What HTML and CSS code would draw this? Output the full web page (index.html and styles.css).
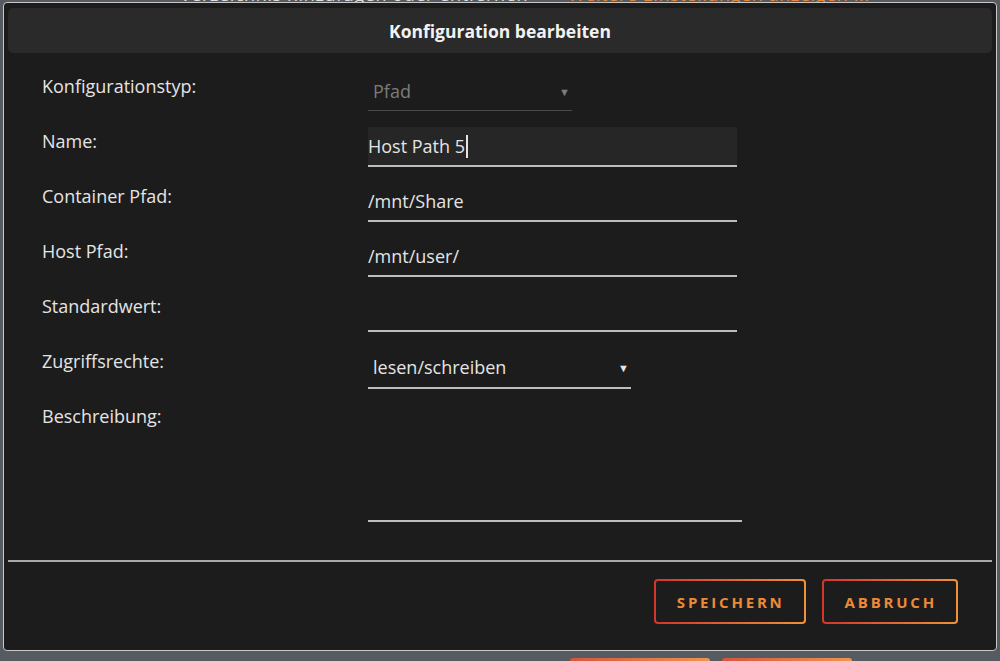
FILE: index.html
```html
<!DOCTYPE html>
<html lang="de">
<head>
  <meta charset="UTF-8" />
  <title>Konfiguration bearbeiten</title>
  <link rel="stylesheet" href="styles.css">
</head>
<body>
  <div class="page-top">
    <span class="page-top-text">Verzeichnis hinzufügen oder entfernen</span>
    <span class="page-top-link">Weitere Einstellungen anzeigen ...</span>
  </div>
  <div class="page-bottom">
    <span class="page-btn wide"></span>
    <span class="page-btn"></span>
  </div>

  <div class="dialog">
    <div class="dialog-title">Konfiguration bearbeiten</div>
    <form class="dialog-form">
      <div class="row">
        <label>Konfigurationstyp:</label>
        <div class="select disabled short">
          <span>Pfad</span>
          <span class="arrow">&#9660;</span>
        </div>
      </div>
      <div class="row">
        <label>Name:</label>
        <div class="input focused">Host Path 5<span class="caret"></span></div>
      </div>
      <div class="row">
        <label>Container Pfad:</label>
        <div class="input">/mnt/Share</div>
      </div>
      <div class="row">
        <label>Host Pfad:</label>
        <div class="input">/mnt/user/</div>
      </div>
      <div class="row">
        <label>Standardwert:</label>
        <div class="input"></div>
      </div>
      <div class="row">
        <label>Zugriffsrechte:</label>
        <div class="select medium">
          <span>lesen/schreiben</span>
          <span class="arrow">&#9660;</span>
        </div>
      </div>
      <div class="row">
        <label>Beschreibung:</label>
        <div class="textarea"></div>
      </div>
    </form>
    <div class="dialog-footer">
      <button type="button" class="button">Speichern</button>
      <button type="button" class="button">Abbruch</button>
    </div>
  </div>
</body>
</html>
```

FILE: styles.css
```css
body {
  margin: 0;
  height: 661px;
  overflow: hidden;
  background-color: #565b61;
  font-family: 'Open Sans', 'Noto Sans', sans-serif;
  color: #e4e4e4;
}
.page-top {
  display: flex;
  gap: 40px;
  margin-top: -15px;
  padding-left: 180px;
  font-size: 18px;
  line-height: 18px;
  letter-spacing: 0.6px;
}
.page-top-text {
  color: #e0e0e0;
}
.page-top-link {
  color: #e8893a;
}
.page-bottom {
  position: absolute;
  top: 658px;
  left: 570px;
  display: flex;
  gap: 12px;
}
.page-btn {
  width: 130px;
  height: 3px;
  border-radius: 4px 4px 0 0;
  background: linear-gradient(90deg, #d7553f, #ee9450);
}
.page-btn.wide {
  width: 140px;
}
.dialog {
  position: absolute;
  top: 2px;
  left: 3px;
  width: 992px;
  height: 647px;
  background-color: #1c1c1c;
  border: 1px solid #c8c8c8;
  border-radius: 4px;
  display: flex;
  flex-direction: column;
}
.dialog-title {
  margin: 5px 4px 0 4px;
  height: 45px;
  background-color: #2a2a2a;
  border-radius: 5px;
  display: flex;
  align-items: center;
  justify-content: center;
  font-weight: 700;
  font-size: 17.5px;
  color: #f2f2f2;
}
.dialog-form {
  padding: 21px 0 0 38px;
  height: 507px;
  box-sizing: border-box;
}
.row {
  display: flex;
  height: 55px;
}
.row label {
  width: 326px;
  flex-shrink: 0;
  font-size: 18px;
  line-height: 24px;
}
.input {
  width: 369px;
  height: 38px;
  margin-top: -2px;
  border-bottom: 2px solid #bdbdbd;
  font-size: 18px;
  display: flex;
  align-items: center;
}
.input.focused {
  background-color: #262626;
}
.caret {
  width: 2px;
  height: 23px;
  background-color: #e4e4e4;
  margin-left: 1px;
}
.select {
  height: 38px;
  margin-top: -2px;
  padding: 0 2px 0 5px;
  border-bottom: 2px solid #bdbdbd;
  display: flex;
  align-items: center;
  justify-content: space-between;
  font-size: 18px;
}
.select.short {
  width: 197px;
  border-bottom: 1px solid #4a4a4a;
}
.select.medium {
  width: 256px;
  height: 40px;
}
.select.disabled {
  color: #7c7c7c;
}
.select .arrow {
  font-size: 11px;
}
.textarea {
  width: 374px;
  height: 116px;
  border-bottom: 2px solid #bdbdbd;
}
.row:last-child {
  height: 120px;
}
.dialog-footer {
  border-top: 2px solid #a8a8a8;
  margin: 0 4px;
  padding: 17px 34px 0 0;
  display: flex;
  justify-content: flex-end;
  gap: 16px;
}
.button {
  height: 45px;
  padding: 0 19px 0 21px;
  border: 2px solid transparent;
  border-radius: 4px;
  background:
    linear-gradient(#1c1c1c, #1c1c1c) padding-box,
    linear-gradient(90deg, #d4352b, #f0923a) border-box;
  color: #ec8a3a;
  font-family: 'Open Sans', sans-serif;
  font-weight: 700;
  font-size: 15px;
  letter-spacing: 2.8px;
  text-transform: uppercase;
  cursor: pointer;
}
```
